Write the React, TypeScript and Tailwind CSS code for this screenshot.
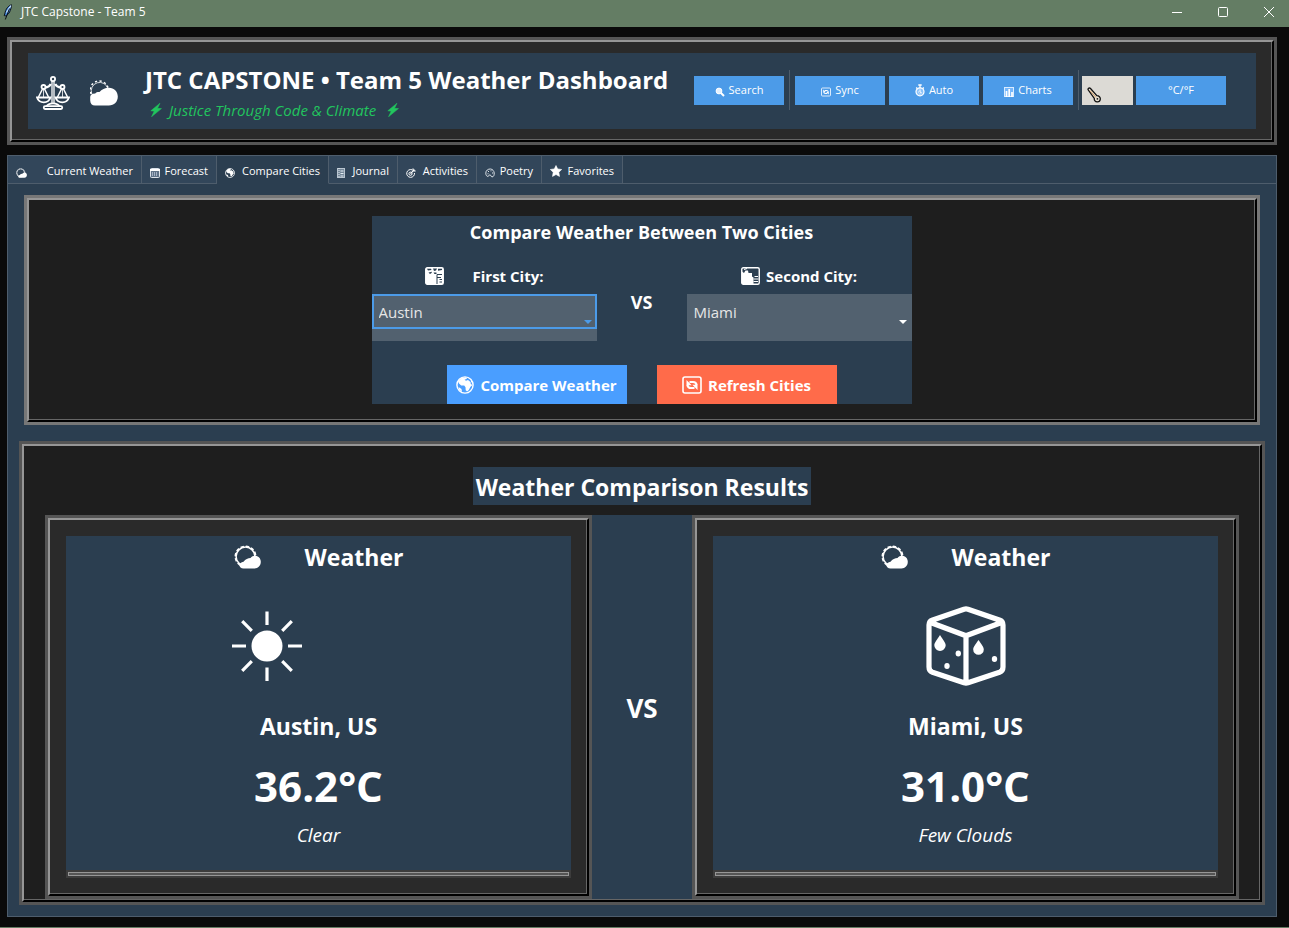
import type { ReactNode } from "react";

type IconProps = { className?: string };

function Feather({ className }: IconProps) {
  return (
    <svg className={className} viewBox="0 0 10 16" aria-hidden="true">
      <path d="M8.500 .8C5.500 1.500 2.500 5 1.800 10l-.6 1.600 1.300.2C6 10.500 8 6.500 8.500.8Z" fill="#4a90e2" stroke="#0a0f18" strokeWidth="1" />
      <path d="M8 1.500 3.500 8.500" stroke="#cfe6ff" strokeWidth="1.200" />
      <path d="M6.500 4.500 2.300 15.500" stroke="#0a0f18" strokeWidth="1" />
    </svg>
  );
}

function Scales({ className }: IconProps) {
  return (
    <svg className={className} viewBox="0 0 34 34" fill="none" stroke="#fff" strokeWidth="1.800" aria-hidden="true">
      <circle cx="17" cy="3" r="2.100" />
      <path d="M16 5v22M18 5v22" strokeWidth="1.300" />
      <path d="M14.800 8c-1.800 3-4 3.500-5.600 3M19.200 8c1.800 3 4 3.500 5.600 3" strokeWidth="2.400" />
      <circle cx="7.500" cy="11" r="2" />
      <circle cx="26.500" cy="11" r="2" />
      <path d="M6.500 13 2.500 21M8.500 13l4 8M25.500 13l-4 8M27.500 13l4 8" strokeWidth="1.500" />
      <path d="M7.500 13v8M26.500 13v8" strokeWidth=".8" />
      <path d="M1 21.500h13.500c-1 3-3.500 4.800-6.700 4.800S2 24.500 1 21.500ZM19.500 21.500H33c-1 3-3.500 4.800-6.700 4.800s-5.800-1.800-6.800-4.800Z" />
      <path d="M10.500 30.500c1-2 3.500-3.200 6.500-3.200s5.500 1.200 6.500 3.200" />
      <rect x="7.800" y="30.200" width="18.400" height="2.800" rx="1.200" />
    </svg>
  );
}

function CloudBehindSun({ className }: IconProps) {
  return (
    <svg className={className} viewBox="0 0 28 26" aria-hidden="true">
      <path d="M1.800 14a8.500 8.500 0 1 1 16.200-5" fill="none" stroke="#fff" strokeWidth=".8" />
      <path d="M1.200 14a9 9 0 1 1 17-5" fill="none" stroke="#fff" strokeWidth="1.500" strokeDasharray="2.200 2.400" />
      <path d="M5 25.500c-3 0-4.800-2-4.800-5V17c0-2 1.500-3.500 5-3.600 1.300-1.200 2.700-1.500 4.300-1.300C11.500 9.500 15 7.700 19 7.700c5 0 8.800 3.800 8.800 8.800 0 5.200-3.500 9-9 9Z" fill="#fff" />
    </svg>
  );
}

function SunBehindCloud({ className }: IconProps) {
  return (
    <svg className={className} viewBox="0 0 27 24" aria-hidden="true">
      <circle cx="11.500" cy="11.500" r="9.400" fill="none" stroke="#fff" strokeWidth="1.500" />
      <circle cx="11.500" cy="11.500" r="10.200" fill="none" stroke="#fff" strokeWidth="1.600" strokeDasharray="3.400 1.940" />
      <path d="M9.500 23.500c-2.500 0-4-1.300-4-3.200s1.600-3.300 4-3.600c2-2.500 4.500-3.400 7-3.700 1.200-1.500 2.700-2.200 4.300-2.200 3.500 0 6 2.600 6 6 0 3.800-2.600 6.700-6.300 6.700Z" fill="#fff" />
    </svg>
  );
}

function Bolt({ className }: IconProps) {
  return (
    <svg className={className} viewBox="0 0 12 14" fill="#22c55e" aria-hidden="true">
      <path d="M10 .2.800 7.800l3.400.4L1.500 13.800l10-8.200-4-.3Z" stroke="#22c55e" strokeWidth=".5" />
    </svg>
  );
}

function Magnifier({ className }: IconProps) {
  return (
    <svg className={className} viewBox="0 0 10 10" aria-hidden="true">
      <circle cx="4" cy="4" r="2.900" fill="#e4f1ff" stroke="#fff" />
      <path d="m6 6 3 3" stroke="#fff" strokeWidth="2" />
    </svg>
  );
}

function SyncBox({ className }: IconProps) {
  return (
    <svg className={className} viewBox="0 0 20 18" fill="none" stroke="#fff" aria-hidden="true">
      <rect x="1" y="1" width="18" height="16" rx="2" strokeWidth="1.600" />
      <path d="M7.500 6H11c2 0 3.300 1 3.600 3.200M12.500 12H9c-2 0-3.300-1-3.600-3.200" strokeWidth="2.200" />
      <path d="M4.500 4v5.200h5.200ZM15.500 14V8.800h-5.200Z" fill="#fff" stroke="none" />
    </svg>
  );
}

function Stopwatch({ className }: IconProps) {
  return (
    <svg className={className} viewBox="0 0 10 13" fill="none" stroke="#fff" aria-hidden="true">
      <circle cx="5" cy="7.800" r="4" fill="#8cc3fa" strokeWidth="1.200" />
      <path d="M3.300 1h3.400M5 1v3M1.200 3.500l1 1M8.800 3.500l-1 1" strokeWidth="1.300" />
      <path d="M5 5.500v2.500l1.800 1M3 8h.8M5 9.500v1" />
    </svg>
  );
}

function BarChart({ className }: IconProps) {
  return (
    <svg className={className} viewBox="0 0 10 10" aria-hidden="true">
      <rect x=".5" y=".5" width="9" height="9" fill="#76b7fb" stroke="#d9ecff" />
      <path d="M2.500 10V4M5.200 10V2M8 10V5" stroke="#fff" strokeWidth="1.700" />
    </svg>
  );
}

function Thermometer({ className }: IconProps) {
  return (
    <svg className={className} viewBox="0 0 14 16" fill="none" aria-hidden="true">
      <path d="M1 2.500c0-1.200 1.500-2 2.500-1l6.300 7.200c2.200 0 3.700 1.500 3.500 3.500-.2 1.700-1.600 2.800-3.200 2.700-1.800-.1-3-1.500-2.800-3.400Z" fill="#e8e2d6" stroke="#111" strokeWidth="1.300" />
      <path d="m3 3.500 6 7" stroke="#d9a066" strokeWidth="1" />
      <circle cx="10.400" cy="11.800" r=".9" fill="#111" />
    </svg>
  );
}

function Calendar({ className }: IconProps) {
  return (
    <svg className={className} viewBox="0 0 10 10" aria-hidden="true">
      <rect x=".5" y=".5" width="9" height="9" rx="1" fill="#5f7388" stroke="#dce3ea" />
      <path d="M0 2h10" stroke="#fff" strokeWidth="2" />
      <path d="M2 5h6M2 7h6" stroke="#e8f0ff" strokeDasharray="1 1" />
    </svg>
  );
}

function Globe({ className }: IconProps) {
  return (
    <svg className={className} viewBox="0 0 18 18" aria-hidden="true">
      <circle cx="9" cy="9" r="8.100" fill="none" stroke="#fff" strokeWidth="1.400" />
      <path d="M2 5.500 5.500 2 10 1.200l1 1.600-2.500.9 1.500 1 2-.6 2.500 2 .3 2 1.700 1-2 1.600-1.700 3.300-1.600 1.500-1.500-1.300-.2-3-1.300-1.700-3-.1L3 7.500Z" fill="#fff" />
      <path d="m15 3 2 4-2-1ZM2.500 11l3 2 .5 3-3-2.500Z" fill="#fff" />
    </svg>
  );
}

function Notebook({ className }: IconProps) {
  return (
    <svg className={className} viewBox="0 0 8 10" aria-hidden="true">
      <rect x=".5" y=".5" width="7" height="9" fill="#748798" stroke="#b9c5d0" />
      <path d="M2 0v10" stroke="#e5edf4" strokeDasharray="1 1" />
      <path d="M3.500 3h3M3.500 5.500h3M3.500 8h3" stroke="#e5edf4" />
    </svg>
  );
}

function Target({ className }: IconProps) {
  return (
    <svg className={className} viewBox="0 0 10 10" fill="none" stroke="#fff" aria-hidden="true">
      <path d="M6 1.800A3.900 3.900 0 1 0 8.500 5" />
      <circle cx="4.500" cy="5.700" r="1.600" />
      <path d="m4.500 5.700 4-4M7 .5V3h2.700" strokeWidth="1.200" />
    </svg>
  );
}

function Palette({ className }: IconProps) {
  return (
    <svg className={className} viewBox="0 0 10 10" fill="none" stroke="#dfe5ea" aria-hidden="true">
      <path d="M5.500 1C3 .8.800 2.600.8 5.200c0 2 1 3.300 2.200 3.200 1.200-.2.800-1.700 2-1.700.9 0 .7 2 2 2.200C8.700 9 9.400 6.800 9.200 5 9 2.800 7.500 1.200 5.500 1Z" />
      <path d="M3 3.500h1M5.500 2.800h1M7 5h1M2.500 5.800h1" />
    </svg>
  );
}

function Star({ className }: IconProps) {
  return (
    <svg className={className} viewBox="0 0 12 12" fill="#fff" stroke="#fff" strokeWidth=".6" strokeLinejoin="round" aria-hidden="true">
      <path d="m6 .5 1.700 3.400 4 .6-2.900 2.700.7 4.200L6 9.500l-3.500 1.900.7-4.200L.3 4.500l4-.6Z" />
    </svg>
  );
}

function CityMap({ className, flip }: IconProps & { flip?: boolean }) {
  return (
    <svg className={className} viewBox="0 0 19 18" aria-hidden="true">
      <rect x=".75" y=".75" width="17.500" height="16.500" rx="1.500" fill={flip ? "none" : "#fff"} stroke="#fff" strokeWidth="1.400" />
      {flip ? (
        <>
          <path d="M1 4.500 3 6l1.500-2.500L7 3.500l.5 2.500H11v3.500l1.500 1V17H1Z" fill="#fff" />
          <path d="m3 2.500 3-1M13.500 9.500H17M12.500 12h5M12.500 14.500H17" stroke="#fff" strokeWidth="1.200" />
        </>
      ) : (
        <>
          <path d="M2 1.700h4l.5 1.300L3 3.500ZM8 1.500h4L11 3.500 9 4ZM13 1.700h4V3l-4 .7ZM3.500 5.500l3.500-.8L6.500 6 5 7ZM8.500 5.500h3V7h-2Z" fill="#2b3e50" />
          <path d="M12 17V7.500h5M12 10.500h4M14.500 12.500H17M14.500 15H17" stroke="#2b3e50" strokeWidth="1" fill="none" />
        </>
      )}
    </svg>
  );
}

function Sun({ className }: IconProps) {
  return (
    <svg className={className} viewBox="0 0 70 70" aria-hidden="true">
      <circle cx="35" cy="35" r="15.500" fill="#fff" />
      <path d="M35 .5V14M35 56.500V70M0 35h14M56 35h14M10.200 10.200l9.600 9.600M50.200 50.200l9.600 9.600M59.800 10.200l-9.600 9.600M19.800 50.200l-9.600 9.600" stroke="#fff" strokeWidth="3.200" />
    </svg>
  );
}

function IceCube({ className }: IconProps) {
  return (
    <svg className={className} viewBox="0 0 80 80" aria-hidden="true">
      <path d="M38 3.200 6 14.200Q3 15.300 3 19v42q0 4 3.500 5.300L38 76.800q2 .6 4 0l31.500-10.500Q77 65 77 61V19q0-3.700-3-4.800L42 3.200q-2-.6-4 0ZM4.500 16.500 38 29q2 .8 4 0l33.500-12.500M40 30v46" fill="none" stroke="#fff" strokeWidth="5.200" strokeLinejoin="round" />
      <path d="M14 29c3 5 5.700 7.500 5.700 10.300a5.700 5.700 0 0 1-11.400 0C8.300 36.500 11 34 14 29ZM52.500 34c3 4.500 5.300 7 5.300 9.500a5.300 5.300 0 0 1-10.600 0c0-2.500 2.300-5 5.300-9.500Z" fill="#fff" />
      <ellipse cx="32.300" cy="47.500" rx="2.700" ry="3" fill="#fff" />
      <ellipse cx="21" cy="60" rx="2.700" ry="3" fill="#fff" />
      <ellipse cx="68.500" cy="53" rx="2.700" ry="3" fill="#fff" />
    </svg>
  );
}

function Bevel({ outer, className, children }: { outer: string; className: string; children: ReactNode }) {
  return (
    <div className={`flex flex-col border-[3px] ${outer}`}>
      <div className="flex grow flex-col border-2 border-t-[#969696] border-r-black border-b-black border-l-[#969696]">
        <div className={`grow border-r border-b border-[#666666] ${className}`}>{children}</div>
      </div>
    </div>
  );
}

function ToolButton({ children }: { children: ReactNode }) {
  return (
    <button type="button" className="flex h-[29px] w-[90px] items-center justify-center gap-1 bg-[#4c9be8] text-[11px] leading-4 text-white">
      {children}
    </button>
  );
}

function Header() {
  return (
    <Bevel outer="border-[#555555]" className="bg-[#2a2a2a] pt-[11px] pr-[15px] pb-[10px] pl-4">
      <header className="flex h-[76px] items-center bg-[#2b3e50] pr-[30px] pl-2">
        <Scales className="mt-1 h-[34px] w-[34px]" />
        <CloudBehindSun className="mt-1 ml-5 h-[26px] w-7" />
        <div className="ml-[27px] pt-px">
          <h1 className="text-[24px] leading-8 font-bold whitespace-nowrap">JTC CAPSTONE • Team 5 Weather Dashboard</h1>
          <p className="mt-1 flex items-center gap-[7px] pl-[5px] text-[15px] leading-5 whitespace-nowrap text-[#22c55e] italic">
            <Bolt className="h-[14px] w-3" />
            Justice Through Code &amp; Climate
            <Bolt className="ml-1 h-[14px] w-3" />
          </p>
        </div>
        <div className="ml-auto flex items-center pb-[2px]">
          <ToolButton><Magnifier className="mt-1 h-[10px] w-[10px]" />Search</ToolButton>
          <span className="mx-[5px] h-10 w-px bg-[#4e5d6c]" />
          <div className="flex gap-1">
            <ToolButton><SyncBox className="mt-1 h-[10px] w-[10px]" />Sync</ToolButton>
            <ToolButton><Stopwatch className="h-[13px] w-[10px]" />Auto</ToolButton>
            <ToolButton><BarChart className="mt-1 h-[10px] w-[10px]" />Charts</ToolButton>
          </div>
          <span className="mr-[3px] ml-[5px] h-10 w-px bg-[#4e5d6c]" />
          <span className="mr-[3px] flex h-[29px] w-[51px] items-end bg-[#dcdad5] pb-[2px] pl-[5px]">
            <Thermometer className="h-4 w-[14px]" />
          </span>
          <ToolButton>°C/°F</ToolButton>
        </div>
      </header>
    </Bevel>
  );
}

const tabs: { label: string; icon: ReactNode; box: string }[] = [
  { label: "Current Weather", icon: <SunBehindCloud className="mt-1 h-[10px] w-[11px]" />, box: "w-[134px]" },
  { label: "Forecast", icon: <Calendar className="mt-1 h-[10px] w-[10px]" />, box: "w-[75px]" },
  { label: "Compare Cities", icon: <Globe className="mt-1 h-[10px] w-[10px]" />, box: "w-[112px]" },
  { label: "Journal", icon: <Notebook className="mt-1 h-[10px] w-2" />, box: "w-[69px]" },
  { label: "Activities", icon: <Target className="mt-1 h-[10px] w-[10px]" />, box: "w-[79px]" },
  { label: "Poetry", icon: <Palette className="mt-1 h-[10px] w-[10px]" />, box: "w-[65px]" },
  { label: "Favorites", icon: <Star className="h-3 w-3" />, box: "w-[81px]" },
];

function TabBar({ active }: { active: string }) {
  return (
    <div role="tablist" className="flex h-7">
      {tabs.map((t) => (
        <button
          key={t.label}
          type="button"
          role="tab"
          aria-selected={t.label === active}
          className={`flex items-center justify-between border-r border-[#4e5d6c] px-2 pt-[2px] text-[11px] leading-4 whitespace-nowrap ${t.box} ${
            t.label === active ? "border-b border-b-transparent bg-[#2b3e50]" : "border-b bg-[#32465a]"
          }`}
        >
          {t.icon}
          {t.label}
        </button>
      ))}
      <div className="grow border-b border-[#4e5d6c]" />
    </div>
  );
}

function CityField({ id, label, icon, city, cities, focused }: { id: string; label: string; icon: ReactNode; city: string; cities: string[]; focused?: boolean }) {
  return (
    <div className="w-[225px]">
      <label htmlFor={id} className="flex h-[35px] items-center justify-center pb-[2px] text-[15px] leading-5 font-bold">
        {icon}
        {label}
      </label>
      <div className="relative h-[47px] bg-[#52616f]">
        <select
          id={id}
          defaultValue={city}
          className={`h-[35px] w-full appearance-none border-2 bg-transparent px-[5px] text-[15px] leading-5 text-[#e6e6e6] outline-none ${
            focused ? "border-[#4c9be8]" : "border-transparent"
          }`}
        >
          {cities.map((c) => (
            <option key={c}>{c}</option>
          ))}
        </select>
        <span
          className={`pointer-events-none absolute top-[26px] right-[5px] border-x-4 border-t-4 border-x-transparent ${
            focused ? "border-t-[#4c9be8]" : "border-t-white"
          }`}
        />
      </div>
    </div>
  );
}

function ComparePanel() {
  return (
    <Bevel outer="border-[#777777]" className="flex justify-center bg-[#1e1e1e] pt-4 pb-[15px]">
      <form className="w-[540px] bg-[#2b3e50]">
        <h2 className="text-center text-[18px] leading-8 font-bold">Compare Weather Between Two Cities</h2>
        <div className="mt-[11px] flex justify-between">
          <CityField id="first-city" label="First City:" icon={<CityMap className="mr-[29px] h-[18px] w-[19px]" />} city="Austin" cities={["Austin", "Miami"]} focused />
          <span className="pt-[29px] text-[18px] leading-7 font-bold">VS</span>
          <CityField id="second-city" label="Second City:" icon={<CityMap flip className="mr-[6px] h-[18px] w-[19px]" />} city="Miami" cities={["Austin", "Miami"]} />
        </div>
        <div className="mt-6 flex justify-center gap-[30px] text-[15px] leading-5 font-bold whitespace-nowrap">
          <button type="button" className="flex h-[39px] w-[180px] items-center justify-center gap-[6px] bg-[#4a9eff]">
            <Globe className="h-[18px] w-[18px]" />
            Compare Weather
          </button>
          <button type="button" className="flex h-[39px] w-[180px] items-center justify-center gap-[6px] bg-[#ff6b4a]">
            <SyncBox className="h-[18px] w-5" />
            Refresh Cities
          </button>
        </div>
      </form>
    </Bevel>
  );
}

function CityCard({ icon, city, temp, sky }: { icon: ReactNode; city: string; temp: string; sky: string }) {
  return (
    <Bevel outer="border-[#555555]" className="flex flex-col bg-[#2a2a2a] pt-4 pr-[15px] pb-[15px] pl-4">
      <article className="flex grow flex-col items-center bg-[#2b3e50] text-center">
        <h3 className="flex h-[42px] items-center gap-11 text-[23px] font-bold">
          <SunBehindCloud className="h-6 w-[27px]" />
          Weather
        </h3>
        <div className="mt-7 flex h-20 items-center">{icon}</div>
        <h4 className="mt-6 text-[23px] leading-8 font-bold">{city}</h4>
        <p className="mt-4 text-[42px] leading-[56px] font-bold">{temp}</p>
        <p className="mt-[9px] text-[19px] leading-6 italic">{sky}</p>
      </article>
      <div className="h-2 border-2 border-[#3c3c3c]">
        <div className="h-1 border border-[#969696] bg-[#555555]" />
      </div>
    </Bevel>
  );
}

function Results() {
  return (
    <Bevel outer="border-[#555555]" className="flex flex-col bg-[#1e1e1e] pt-[21px] pr-5 pl-[21px]">
      <h2 className="mb-[10px] self-center bg-[#2b3e50] px-[3px] pt-[2px] text-[23px] leading-9 font-bold">Weather Comparison Results</h2>
      <div className="grid grow grid-cols-[1fr_100px_1fr]">
        <CityCard icon={<Sun className="mr-[104px] h-[70px] w-[70px]" />} city="Austin, US" temp="36.2°C" sky="Clear" />
        <div className="flex items-center justify-center bg-[#2b3e50] pt-[2px] text-[26px] font-bold">VS</div>
        <CityCard icon={<IceCube className="h-20 w-20" />} city="Miami, US" temp="31.0°C" sky="Few Clouds" />
      </div>
    </Bevel>
  );
}

export default function App() {
  return (
    <div className="flex min-h-screen flex-col border-b border-[#647d64] bg-[#0a0a0a] font-['Open_Sans','Noto_Sans',sans-serif] text-white">
      <div className="flex h-[27px] items-center bg-[#647d64] pb-1 pl-[3px] text-[12px]">
        <Feather className="h-4 w-[10px]" />
        <span className="ml-2">JTC Capstone - Team 5</span>
        <div className="ml-auto flex pr-[15px]">
          <button type="button" aria-label="Minimize" className="mr-9">
            <svg className="h-[10px] w-[10px]" viewBox="0 0 10 10"><path d="M0 5.500h10" stroke="#fff" /></svg>
          </button>
          <button type="button" aria-label="Maximize" className="mr-9">
            <svg className="h-[10px] w-[10px]" viewBox="0 0 10 10"><rect x=".5" y=".5" width="9" height="9" rx="1" fill="none" stroke="#fff" /></svg>
          </button>
          <button type="button" aria-label="Close">
            <svg className="h-[10px] w-[10px]" viewBox="0 0 10 10"><path d="m0 0 10 10M10 0 0 10" stroke="#fff" /></svg>
          </button>
        </div>
      </div>
      <div className="flex grow flex-col gap-[10px] pt-[10px] pr-3 pb-[10px] pl-[7px]">
        <Header />
        <main className="flex grow flex-col border border-[#4e5d6c] bg-[#2b3e50]">
          <TabBar active="Compare Cities" />
          <div className="px-4 pt-[11px]">
            <ComparePanel />
          </div>
          <div className="flex grow flex-col px-[11px] pt-4 pb-[11px] *:grow">
            <Results />
          </div>
        </main>
      </div>
    </div>
  );
}
